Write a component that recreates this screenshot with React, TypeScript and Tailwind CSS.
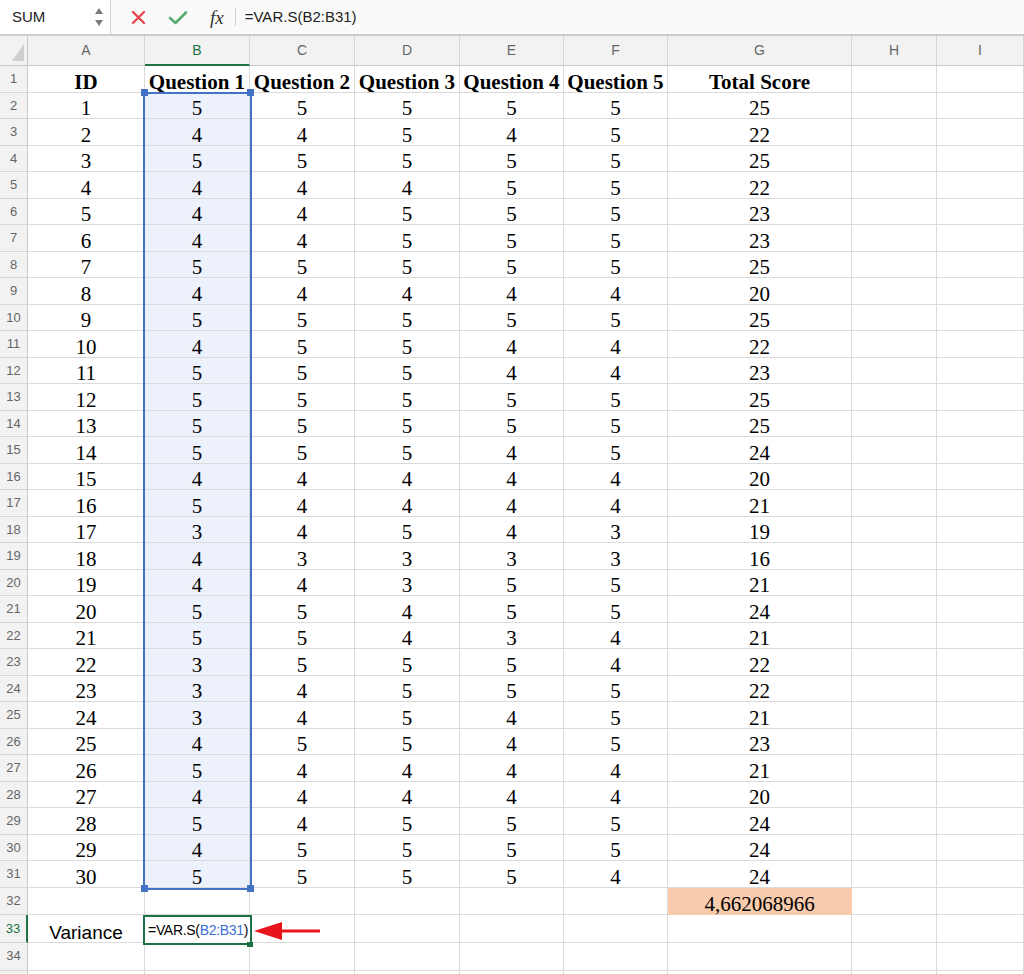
import React from 'react'

const COLS = ['A', 'B', 'C', 'D', 'E', 'F', 'G', 'H', 'I']

// ID, Q1..Q5, Total
const DATA: number[][] = [
  [1, 5, 5, 5, 5, 5, 25],
  [2, 4, 4, 5, 4, 5, 22],
  [3, 5, 5, 5, 5, 5, 25],
  [4, 4, 4, 4, 5, 5, 22],
  [5, 4, 4, 5, 5, 5, 23],
  [6, 4, 4, 5, 5, 5, 23],
  [7, 5, 5, 5, 5, 5, 25],
  [8, 4, 4, 4, 4, 4, 20],
  [9, 5, 5, 5, 5, 5, 25],
  [10, 4, 5, 5, 4, 4, 22],
  [11, 5, 5, 5, 4, 4, 23],
  [12, 5, 5, 5, 5, 5, 25],
  [13, 5, 5, 5, 5, 5, 25],
  [14, 5, 5, 5, 4, 5, 24],
  [15, 4, 4, 4, 4, 4, 20],
  [16, 5, 4, 4, 4, 4, 21],
  [17, 3, 4, 5, 4, 3, 19],
  [18, 4, 3, 3, 3, 3, 16],
  [19, 4, 4, 3, 5, 5, 21],
  [20, 5, 5, 4, 5, 5, 24],
  [21, 5, 5, 4, 3, 4, 21],
  [22, 3, 5, 5, 5, 4, 22],
  [23, 3, 4, 5, 5, 5, 22],
  [24, 3, 4, 5, 4, 5, 21],
  [25, 4, 5, 5, 4, 5, 23],
  [26, 5, 4, 4, 4, 4, 21],
  [27, 4, 4, 4, 4, 4, 20],
  [28, 5, 4, 5, 5, 5, 24],
  [29, 4, 5, 5, 5, 5, 24],
  [30, 5, 5, 5, 5, 4, 24],
]

const HEADERS = ['ID', 'Question 1', 'Question 2', 'Question 3', 'Question 4', 'Question 5', 'Total Score']

const GRID = 'grid grid-cols-[28px_117px_105px_105px_105px_104px_104px_184px_85px_1fr]'

function RowHead({ n, active }: { n?: number; active?: boolean }) {
  return (
    <div
      className={`flex items-center justify-center bg-[#f2f2f2] border-b border-b-[#d6d6d6] font-['Liberation_Sans',sans-serif] text-[13px] ${
        active ? 'text-[#217346] border-r-2 border-r-[#217346]' : 'text-[#666] border-r border-r-[#c9c9c9]'
      }`}
    >
      {n}
    </div>
  )
}

function Cell({ children, className = '' }: { children?: React.ReactNode; className?: string }) {
  return (
    <div className={`flex items-end justify-center pb-0 border-r border-b border-[#dadada] leading-[19px] ${className}`}>
      {children}
    </div>
  )
}

function Blank({ n }: { n: number }) {
  return (
    <>
      {Array.from({ length: n }).map((_, i) => (
        <Cell key={i} />
      ))}
    </>
  )
}

export default function App() {
  return (
    <div className="relative w-[1024px] h-[974px] overflow-hidden bg-white font-['Liberation_Sans',sans-serif]">
      {/* Formula bar */}
      <div className="flex h-[36px] items-center bg-[#fafafa] border-b-2 border-[#cdcdcd]">
        <div className="flex h-full w-[111px] items-center justify-between border-r border-[#d0d0d0] bg-white pl-[12px] pr-[6px]">
          <span className="text-[15px] text-[#222]">SUM</span>
          <svg width="10" height="22" viewBox="0 0 10 22">
            <path d="M5 2 L9 8 L1 8 Z" fill="#7a7a7a" />
            <path d="M5 20 L9 14 L1 14 Z" fill="#7a7a7a" />
          </svg>
        </div>
        <div className="flex items-center gap-[22px] pl-[20px]">
          <svg width="15" height="15" viewBox="0 0 15 15">
            <path d="M2 2 L13 13 M13 2 L2 13" stroke="#e5484d" strokeWidth="2.4" strokeLinecap="round" />
          </svg>
          <svg width="20" height="15" viewBox="0 0 20 15">
            <path d="M2 8 L7.5 13 L18 2.5" stroke="#5aa971" strokeWidth="2.6" fill="none" strokeLinecap="round" strokeLinejoin="round" />
          </svg>
          <span className="font-['Liberation_Serif',serif] italic text-[19px] text-[#333] leading-none">fx</span>
        </div>
        <div className="ml-[11px] h-[18px] w-px bg-[#cfcfcf]" />
        <span className="ml-[9px] text-[15px] text-[#222]">=VAR.S(B2:B31)</span>
      </div>

      {/* Column headers */}
      <div className={`${GRID} h-[30px] bg-[#f2f2f2] text-[14px] text-[#666]`}>
        <div className="relative border-r border-b border-[#c9c9c9]">
          <svg className="absolute right-[3px] bottom-[4px]" width="12" height="17" viewBox="0 0 12 17">
            <path d="M12 0 L12 17 L0 17 Z" fill="#cfcfcf" />
          </svg>
        </div>
        {COLS.map(c => (
          <div
            key={c}
            className={`flex items-center justify-center border-r border-[#d6d6d6] ${
              c === 'B' ? 'text-[#217346] border-b-2 border-b-[#217346]' : 'border-b border-b-[#c9c9c9]'
            }`}
          >
            {c}
          </div>
        ))}
      </div>

      {/* Body */}
      <div className="font-['Liberation_Serif',serif] text-[21px] text-black">
        <div className={`${GRID} h-[26.5px]`}>
          <RowHead n={1} />
          {HEADERS.map(h => (
            <Cell key={h} className="font-bold">{h}</Cell>
          ))}
          <Blank n={2} />
        </div>
        {DATA.map((row, i) => (
          <div key={i} className={`${GRID} h-[26.5px]`}>
            <RowHead n={i + 2} />
            {row.map((v, j) => (
              <Cell key={j} className={j === 1 ? 'bg-[#edf1fb]' : ''}>{v}</Cell>
            ))}
            <Blank n={2} />
          </div>
        ))}
        <div className={`${GRID} h-[27.7px]`}>
          <RowHead n={32} />
          <Blank n={6} />
          <Cell className="bg-[#f8cbad] border-r-[#f8cbad] border-b-[#f8cbad]">4,662068966</Cell>
          <Blank n={2} />
        </div>
        <div className={`${GRID} h-[27.7px]`}>
          <RowHead n={33} active />
          <Cell className="font-['Liberation_Sans',sans-serif] text-[19px] items-center">Variance</Cell>
          <Blank n={8} />
        </div>
        <div className={`${GRID} h-[27.7px]`}>
          <RowHead n={34} />
          <Blank n={9} />
        </div>
        <div className={`${GRID} h-[27.7px]`}>
          <RowHead />
          <Blank n={9} />
        </div>
      </div>

      {/* Range highlight B2:B31 */}
      <div className="absolute left-[143px] top-[92px] w-[109px] h-[798px] border-2 border-[#4472c4]" />
      <div className="absolute left-[141px] top-[89px] w-[7px] h-[7px] bg-[#4472c4]" />
      <div className="absolute left-[247px] top-[89px] w-[7px] h-[7px] bg-[#4472c4]" />
      <div className="absolute left-[141px] top-[885px] w-[7px] h-[7px] bg-[#4472c4]" />
      <div className="absolute left-[247px] top-[885px] w-[7px] h-[7px] bg-[#4472c4]" />

      {/* Active cell B33 */}
      <div className="absolute left-[143px] top-[915px] w-[109px] h-[30px] border-2 border-[#1e7145] bg-white flex items-center pl-[3px]">
        <span className="whitespace-nowrap text-[14px] tracking-[-0.3px] text-black leading-none">
          =VAR.S(<span className="text-[#3b6fd4]">B2:B31</span>)
        </span>
      </div>
      <div className="absolute left-[247px] top-[942px] w-[6px] h-[5px] bg-[#1e7145]" />

      {/* Red arrow */}
      <svg className="absolute left-[253px] top-[921px]" width="70" height="20" viewBox="0 0 70 20">
        <path d="M1 10 L29 1 L29 19 Z" fill="#e8141b" />
        <path d="M28 10 L67 10" stroke="#e8141b" strokeWidth="3" />
      </svg>
    </div>
  )
}
